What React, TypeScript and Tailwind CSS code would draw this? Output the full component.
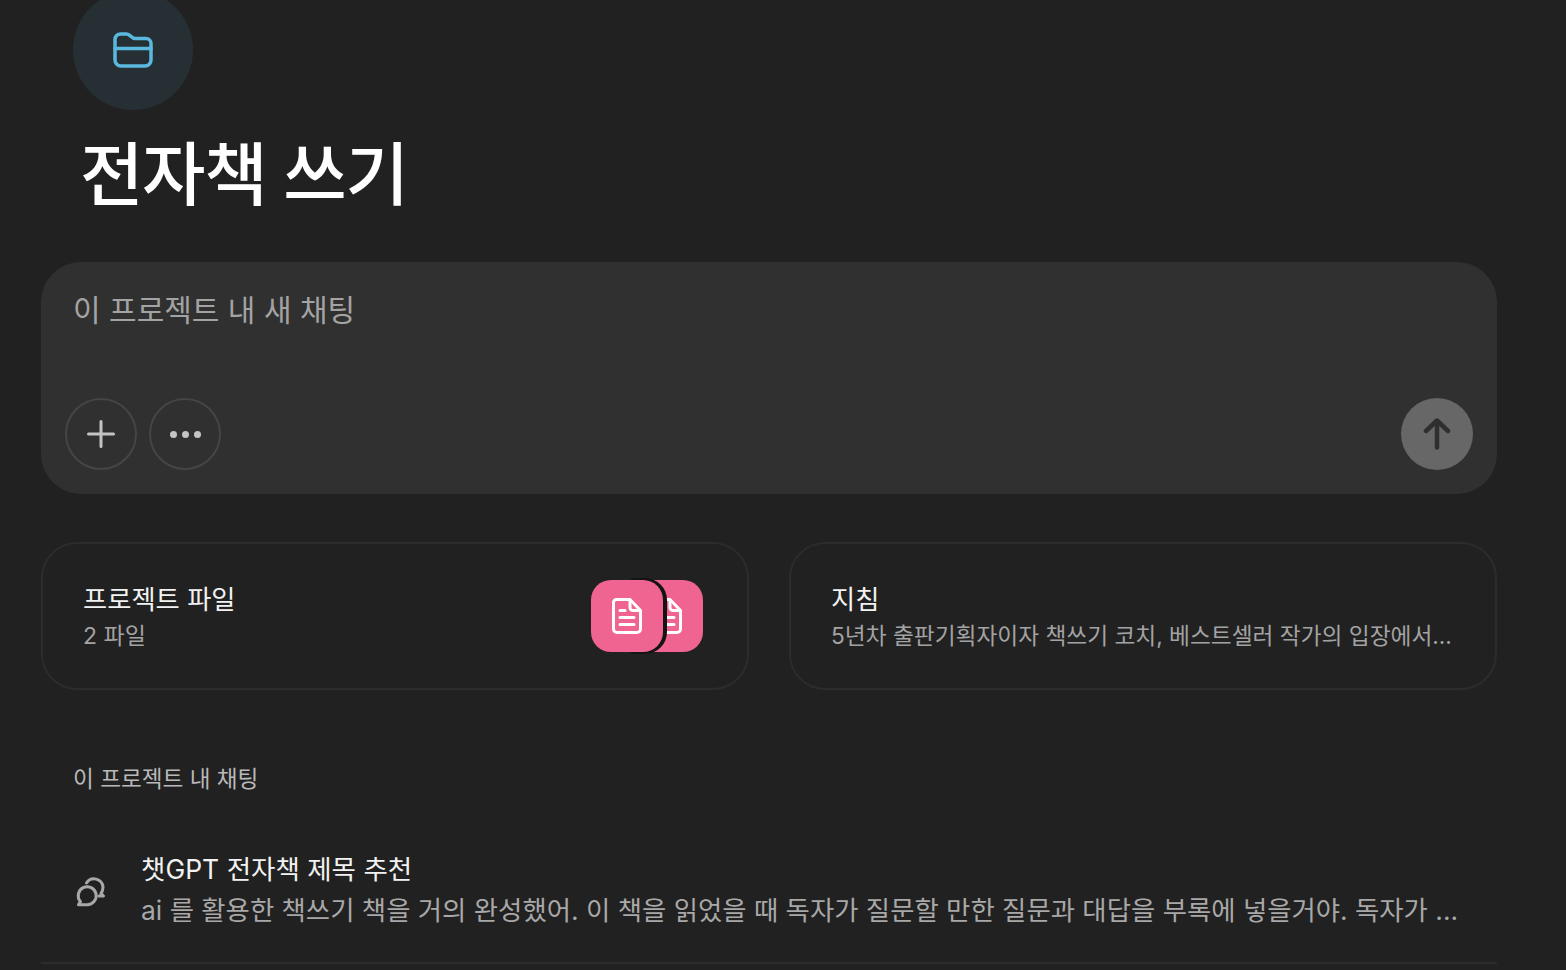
const FONT = "font-['Inter','Noto_Sans_CJK_KR',sans-serif]";

function FileIcon({ className }: { className?: string }) {
  return (
    <svg viewBox="0 0 30 36" fill="none" stroke="currentColor" strokeWidth="3" strokeLinecap="round" strokeLinejoin="round" className={className}>
      <path d="M4.500 1.500H18L28.500 12.500V31a3.500 3.500 0 0 1-3.500 3.500H5A3.500 3.500 0 0 1 1.500 31V4.500a3 3 0 0 1 3-3Z" />
      <path d="M18 2v7.500a3 3 0 0 0 3 3h7" />
      <path d="M8 12.500h5M8 19.500h14M8 26.500h14" />
    </svg>
  );
}

export default function App() {
  return (
    <div className={`${FONT} h-[970px] w-full overflow-hidden bg-[#212121] pl-[41px] pr-[69px] text-white`}>
      {/* Header */}
      <div className="-mt-[10px] ml-[32px] flex h-[120px] w-[120px] items-center justify-center rounded-full bg-[#263034]">
        <svg viewBox="0 0 40 36" fill="none" stroke="#5BB8DE" strokeWidth="3.500" strokeLinecap="round" strokeLinejoin="round" className="h-[36px] w-[40px]">
          <path d="M2 7.500A5.500 5.500 0 0 1 7.500 2h6c2 0 3 1 4.300 2.300 1.200 1.200 2.200 2.200 4.200 2.200h11a5 5 0 0 1 5 5V28a6 6 0 0 1-6 6H8a6 6 0 0 1-6-6Z" />
          <path d="M2 16.500h36" />
        </svg>
      </div>
      <h1 className="ml-[39px] mt-[21px] text-[69px] leading-[89px] font-medium tracking-[-0.02em]">전자책 쓰기</h1>

      {/* Composer */}
      <div className="mt-[42px] flex h-[232px] flex-col justify-between rounded-[40px] bg-[#303030] px-[24px] pb-[24px] pt-[28px]">
        <div className="pl-[8px] text-[30px] leading-[40px] text-[#a3a3a3]">이 프로젝트 내 새 채팅</div>
        <div className="flex items-center gap-[12px]">
          <button type="button" className="flex h-[72px] w-[72px] items-center justify-center rounded-full border-2 border-[#454545]">
            <svg viewBox="0 0 28 28" className="h-[28px] w-[28px]" stroke="#c4c4c4" strokeWidth="3" strokeLinecap="round">
              <path d="M14 1.500v25M1.500 14h25" />
            </svg>
          </button>
          <button type="button" className="flex h-[72px] w-[72px] items-center justify-center gap-[5px] rounded-full border-2 border-[#454545]">
            <span className="h-[7px] w-[7px] rounded-full bg-[#c4c4c4]" />
            <span className="h-[7px] w-[7px] rounded-full bg-[#c4c4c4]" />
            <span className="h-[7px] w-[7px] rounded-full bg-[#c4c4c4]" />
          </button>
          <button type="button" className="ml-auto flex h-[72px] w-[72px] items-center justify-center rounded-full bg-[#676767]">
            <svg viewBox="0 0 28 32" fill="none" className="h-[32px] w-[28px]" stroke="#2f2f2f" strokeWidth="4.500" strokeLinecap="round" strokeLinejoin="round">
              <path d="M14 29.500V3M3 13 14 2.500 25 13" />
            </svg>
          </button>
        </div>
      </div>

      {/* Cards */}
      <div className="mt-[48px] grid grid-cols-2 gap-[40px]">
        <div className="flex h-[148px] items-center justify-between rounded-[36px] border-2 border-[#2c2c2c] pl-[40px] pr-[44px]">
          <div className="pt-[3px]">
            <div className="translate-y-[1px] text-[26.300px] leading-[36px] text-[#f2f2f2]">프로젝트 파일</div>
            <div className="mt-[1px] text-[23px] leading-[36px] text-[#a3a3a3]">2 파일</div>
          </div>
          <div className="relative h-[72px] w-[112px]">
            <div className="absolute right-0 top-0 flex h-[72px] w-[72px] items-center justify-center rounded-[20px] bg-[#EF6491] text-white">
              <FileIcon className="h-[36px] w-[30px]" />
            </div>
            <div className="absolute left-[40px] top-[-2px] h-[76px] w-[36px] rounded-r-[22px] bg-[#141414]" />
            <div className="absolute left-0 top-0 flex h-[72px] w-[72px] items-center justify-center rounded-[20px] bg-[#EF6491] text-white">
              <FileIcon className="h-[36px] w-[30px]" />
            </div>
          </div>
        </div>
        <div className="flex h-[148px] flex-col justify-center rounded-[36px] border-2 border-[#2c2c2c] pl-[40px] pr-[44px] pt-[3px]">
          <div className="translate-y-[1px] text-[26.300px] leading-[36px] text-[#f2f2f2]">지침</div>
          <div className="mt-[1px] whitespace-nowrap text-[22.700px] leading-[36px] text-[#a3a3a3]">5년차 출판기획자이자 책쓰기 코치, 베스트셀러 작가의 입장에서...</div>
        </div>
      </div>

      {/* Chats */}
      <div className="ml-[32px] mt-[73px] text-[22.600px] leading-[32px] text-[#b9b9b9]">이 프로젝트 내 채팅</div>
      <div className="mt-[53px] flex h-[116px] items-start border-b-2 border-[#2c2c2c]">
        <svg viewBox="0 0 34 34" fill="none" stroke="#a8a8a8" strokeWidth="3" strokeLinecap="round" strokeLinejoin="round" className="ml-[33px] mt-[26px] h-[34px] w-[34px] shrink-0">
          <path d="M12.700 30.700H4.500l2-3A9 9 0 1 1 12.700 30.700Z" />
          <path d="M12.500 9A9 9 0 0 1 29 13c0 2.800-.7 4.800-2 6.500l2.500 2.500H25" />
        </svg>
        <div className="ml-[33px] min-w-0 flex-1 pt-[2px]">
          <div className="text-[26.500px] leading-[38px] text-[#f2f2f2]">챗GPT 전자책 제목 추천</div>
          <div className="mt-[2px] whitespace-nowrap text-[26.400px] leading-[40px] text-[#a8a8a8]">ai 를 활용한 책쓰기 책을 거의 완성했어. 이 책을 읽었을 때 독자가 질문할 만한 질문과 대답을 부록에 넣을거야. 독자가 ...</div>
        </div>
      </div>
    </div>
  );
}
